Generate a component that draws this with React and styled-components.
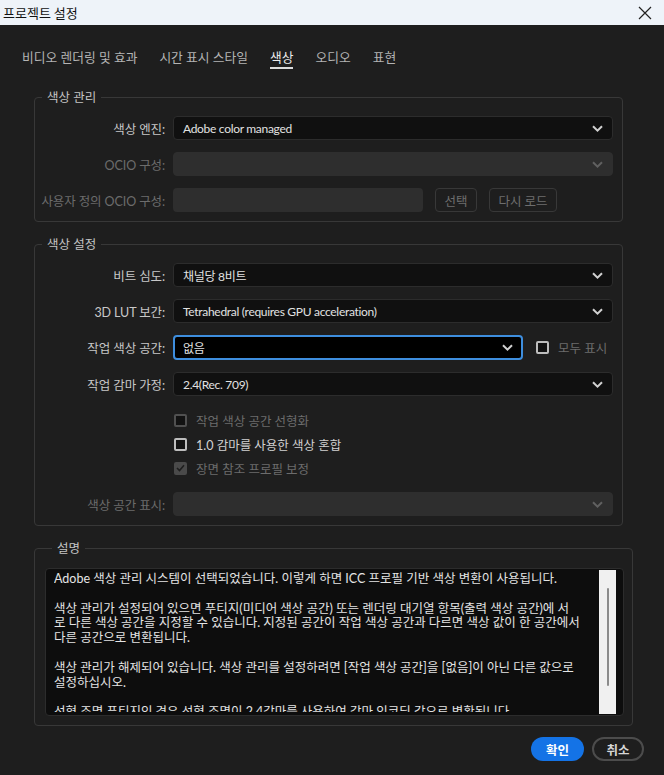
import React from "react";
import styled, { createGlobalStyle } from "styled-components";

const GlobalStyle = createGlobalStyle`
  html, body {
    margin: 0;
    padding: 0;
    background: #1e1e1e;
  }
  body {
    font-family: Lato, "Noto Sans CJK KR", "Noto Sans", sans-serif;
    -webkit-font-smoothing: antialiased;
  }
  * {
    box-sizing: border-box;
  }
`;

const Window = styled.div`
  width: 664px;
  height: 775px;
  display: flex;
  flex-direction: column;
  background: #1e1e1e;
  overflow: hidden;
`;

const TitleBar = styled.div`
  height: 25px;
  flex: none;
  background: #eef3f9;
  display: flex;
  align-items: center;
  justify-content: space-between;
  padding: 0 12px 0 3px;
  color: #111;
  font-size: 13px;
  font-family: "Noto Sans CJK KR", sans-serif;
`;

const CloseButton = styled.div`
  width: 14px;
  height: 14px;
  display: flex;
  align-items: center;
  justify-content: center;
`;

const Tabs = styled.div`
  display: flex;
  gap: 22px;
  padding: 23px 0 0 22px;
`;

const Tab = styled.div`
  font-size: 12.75px;
  line-height: 18px;
  padding-bottom: 1px;
  color: ${(p) => (p.$active ? "#ececec" : "#b4b4b4")};
  border-bottom: 2px solid ${(p) => (p.$active ? "#dcdcdc" : "transparent")};
`;

const Content = styled.div`
  padding: 20px 41px 0 34px;
  display: flex;
  flex-direction: column;
  gap: 14px;
`;

const Section = styled.fieldset`
  margin: 0 ${(p) => p.$extendRight || 0}px 0 0;
  border: 1px solid #383838;
  border-radius: 4px;
  padding: ${(p) => p.$pad || "10px 9px 9px 0"};
  min-width: 0;
`;

const Legend = styled.legend`
  margin-left: 7px;
  padding: 0 5px;
  font-size: 12.5px;
  line-height: 17px;
  color: #c4c4c4;
`;

const FormGrid = styled.div`
  display: grid;
  grid-template-columns: 130px 1fr;
  column-gap: 8px;
  row-gap: 12px;
  align-items: center;
`;

const Label = styled.div`
  text-align: right;
  font-size: 12.5px;
  white-space: nowrap;
  letter-spacing: -0.1px;
  color: ${(p) => (p.$disabled ? "#6c6c6c" : "#c8c8c8")};
`;

const SelectBox = styled.div`
  height: ${(p) => (p.$focused ? "25px" : "24px")};
  width: ${(p) => (p.$width ? `${p.$width}px` : "auto")};
  flex: ${(p) => (p.$width ? "none" : "1")};
  border-radius: 4px;
  border: ${(p) =>
    p.$focused ? "2px solid #3e8ede" : p.$disabled ? "1px solid #2e2e2e" : "1px solid #2c2c2c"};
  background: ${(p) => (p.$focused ? "#000" : p.$disabled ? "#2e2e2e" : "#101010")};
  display: flex;
  align-items: center;
  justify-content: space-between;
  padding: 0 ${(p) => (p.$focused ? "8px" : "9px")};
  color: #e2e2e2;
  font-size: 12px;
  letter-spacing: -0.3px;
`;

const InlineRow = styled.div`
  display: flex;
  align-items: center;
  gap: 12px;
`;

const TextInput = styled.div`
  width: 250px;
  height: 24px;
  border-radius: 4px;
  background: #2e2e2e;
`;

const GhostButton = styled.div`
  height: 24px;
  width: ${(p) => p.$width}px;
  border: 1px solid #383838;
  border-radius: 4px;
  display: flex;
  align-items: center;
  justify-content: center;
  font-size: 12.5px;
  color: #6e6e6e;
`;

const CheckGroup = styled.div`
  grid-column: 2;
  display: flex;
  flex-direction: column;
`;

const CheckRow = styled.label`
  height: 24px;
  display: flex;
  align-items: center;
  gap: 9px;
  padding-left: 1px;
  font-size: 12.5px;
  white-space: nowrap;
  color: ${(p) => (p.$disabled ? "#6c6c6c" : "#d2d2d2")};
`;

const Box = styled.span`
  width: 13px;
  height: 13px;
  flex: none;
  border-radius: 2px;
  border: 2px solid ${(p) => (p.$checked ? "#4a4a4a" : p.$disabled ? "#505050" : "#bdbdbd")};
  background: ${(p) => (p.$checked ? "#4a4a4a" : "#121212")};
  display: flex;
  align-items: center;
  justify-content: center;
`;

const Description = styled.div`
  height: 148px;
  border: 1px solid #2c2c2c;
  border-radius: 4px;
  background: #0d0d0d;
  display: flex;
  overflow: hidden;
`;

const DescText = styled.div`
  flex: 1;
  margin: 3px 0 3px 8px;
  overflow: hidden;
  font-size: 12.5px;
  line-height: 14.8px;
  color: #e4e4e4;
`;

const DescLine = styled.div`
  height: 14.8px;
  white-space: nowrap;
`;

const Scrollbar = styled.div`
  width: 17px;
  flex: none;
  margin: 1px 7px 1px 0;
  background: #f0f0f0;
  display: flex;
  justify-content: center;
  padding: 18px 0 28px;
`;

const Thumb = styled.div`
  width: 2px;
  background: #8b8b8b;
  border-radius: 1px;
`;

const Footer = styled.div`
  margin-top: auto;
  display: flex;
  justify-content: flex-end;
  gap: 8px;
  padding: 0 20px 14px 0;
`;

const PrimaryButton = styled.div`
  width: 53px;
  height: 24px;
  border-radius: 12px;
  background: #1473e6;
  color: #fff;
  font-weight: 700;
  font-size: 12.5px;
  display: flex;
  align-items: center;
  justify-content: center;
`;

const SecondaryButton = styled.div`
  width: 52px;
  height: 24px;
  border-radius: 12px;
  border: 2px solid #4c4c4c;
  color: #d6d6d6;
  font-weight: 700;
  font-size: 12.5px;
  display: flex;
  align-items: center;
  justify-content: center;
`;

const Chevron = ({ disabled }) => (
  <svg width="11" height="7" viewBox="0 0 11 7">
    <path
      d="M1 1.2 L5.5 5.6 L10 1.2"
      fill="none"
      stroke={disabled ? "#606060" : "#d0d0d0"}
      strokeWidth="2"
    />
  </svg>
);

const Select = ({ value, disabled, focused, width }) => (
  <SelectBox $disabled={disabled} $focused={focused} $width={width}>
    <span>{value}</span>
    <Chevron disabled={disabled} />
  </SelectBox>
);

const Checkbox = ({ label, checked, disabled, boxDisabled }) => (
  <CheckRow $disabled={disabled}>
    <Box $checked={checked} $disabled={boxDisabled ?? disabled}>
      {checked && (
        <svg width="9" height="8" viewBox="0 0 9 8">
          <path d="M1 4 L3.5 6.5 L8 1.2" fill="none" stroke="#1e1e1e" strokeWidth="1.6" />
        </svg>
      )}
    </Box>
    {label}
  </CheckRow>
);

const tabs = ["비디오 렌더링 및 효과", "시간 표시 스타일", "색상", "오디오", "표현"];

const descLines = [
  "Adobe 색상 관리 시스템이 선택되었습니다. 이렇게 하면 ICC 프로필 기반 색상 변환이 사용됩니다.",
  "",
  "색상 관리가 설정되어 있으면 푸티지(미디어 색상 공간) 또는 렌더링 대기열 항목(출력 색상 공간)에 서",
  "로 다른 색상 공간을 지정할 수 있습니다. 지정된 공간이 작업 색상 공간과 다르면 색상 값이 한 공간에서",
  "다른 공간으로 변환됩니다.",
  "",
  "색상 관리가 해제되어 있습니다. 색상 관리를 설정하려면 [작업 색상 공간]을 [없음]이 아닌 다른 값으로",
  "설정하십시오.",
  "",
  "선형 조명 푸티지인 경우 선형 조명이 2.4감마를 사용하여 감마 인코딩 값으로 변환됩니다.",
  "",
];

export default function App() {
  return (
    <Window>
      <GlobalStyle />
      <TitleBar>
        <span>프로젝트 설정</span>
        <CloseButton>
          <svg width="14" height="14" viewBox="0 0 14 14">
            <path d="M1 1 L13 13 M13 1 L1 13" stroke="#222" strokeWidth="1.2" />
          </svg>
        </CloseButton>
      </TitleBar>

      <Tabs>
        {tabs.map((t) => (
          <Tab key={t} $active={t === "색상"}>
            {t}
          </Tab>
        ))}
      </Tabs>

      <Content>
        <Section>
          <Legend>색상 관리</Legend>
          <FormGrid>
            <Label>색상 엔진:</Label>
            <Select value="Adobe color managed" />
            <Label $disabled>OCIO 구성:</Label>
            <Select disabled />
            <Label $disabled>사용자 정의 OCIO 구성:</Label>
            <InlineRow>
              <TextInput />
              <GhostButton $width={42}>선택</GhostButton>
              <GhostButton $width={68}>다시 로드</GhostButton>
            </InlineRow>
          </FormGrid>
        </Section>

        <Section>
          <Legend>색상 설정</Legend>
          <FormGrid>
            <Label>비트 심도:</Label>
            <Select value="채널당 8비트" />
            <Label>3D LUT 보간:</Label>
            <Select value="Tetrahedral (requires GPU acceleration)" />
            <Label>작업 색상 공간:</Label>
            <InlineRow>
              <Select value="없음" focused width={350} />
              <Checkbox label="모두 표시" disabled boxDisabled={false} />
            </InlineRow>
            <Label>작업 감마 가정:</Label>
            <Select value="2.4(Rec. 709)" />
            <CheckGroup>
              <Checkbox label="작업 색상 공간 선형화" disabled />
              <Checkbox label="1.0 감마를 사용한 색상 혼합" />
              <Checkbox label="장면 참조 프로필 보정" disabled checked />
            </CheckGroup>
            <Label $disabled>색상 공간 표시:</Label>
            <Select disabled />
          </FormGrid>
        </Section>

        <Section $extendRight={-10} $pad="11px 8px 9px 10px">
          <Legend>설명</Legend>
          <Description>
            <DescText>
              {descLines.map((line, i) => (
                <DescLine key={i}>{line}</DescLine>
              ))}
            </DescText>
            <Scrollbar>
              <Thumb />
            </Scrollbar>
          </Description>
        </Section>
      </Content>

      <Footer>
        <PrimaryButton>확인</PrimaryButton>
        <SecondaryButton>취소</SecondaryButton>
      </Footer>
    </Window>
  );
}
